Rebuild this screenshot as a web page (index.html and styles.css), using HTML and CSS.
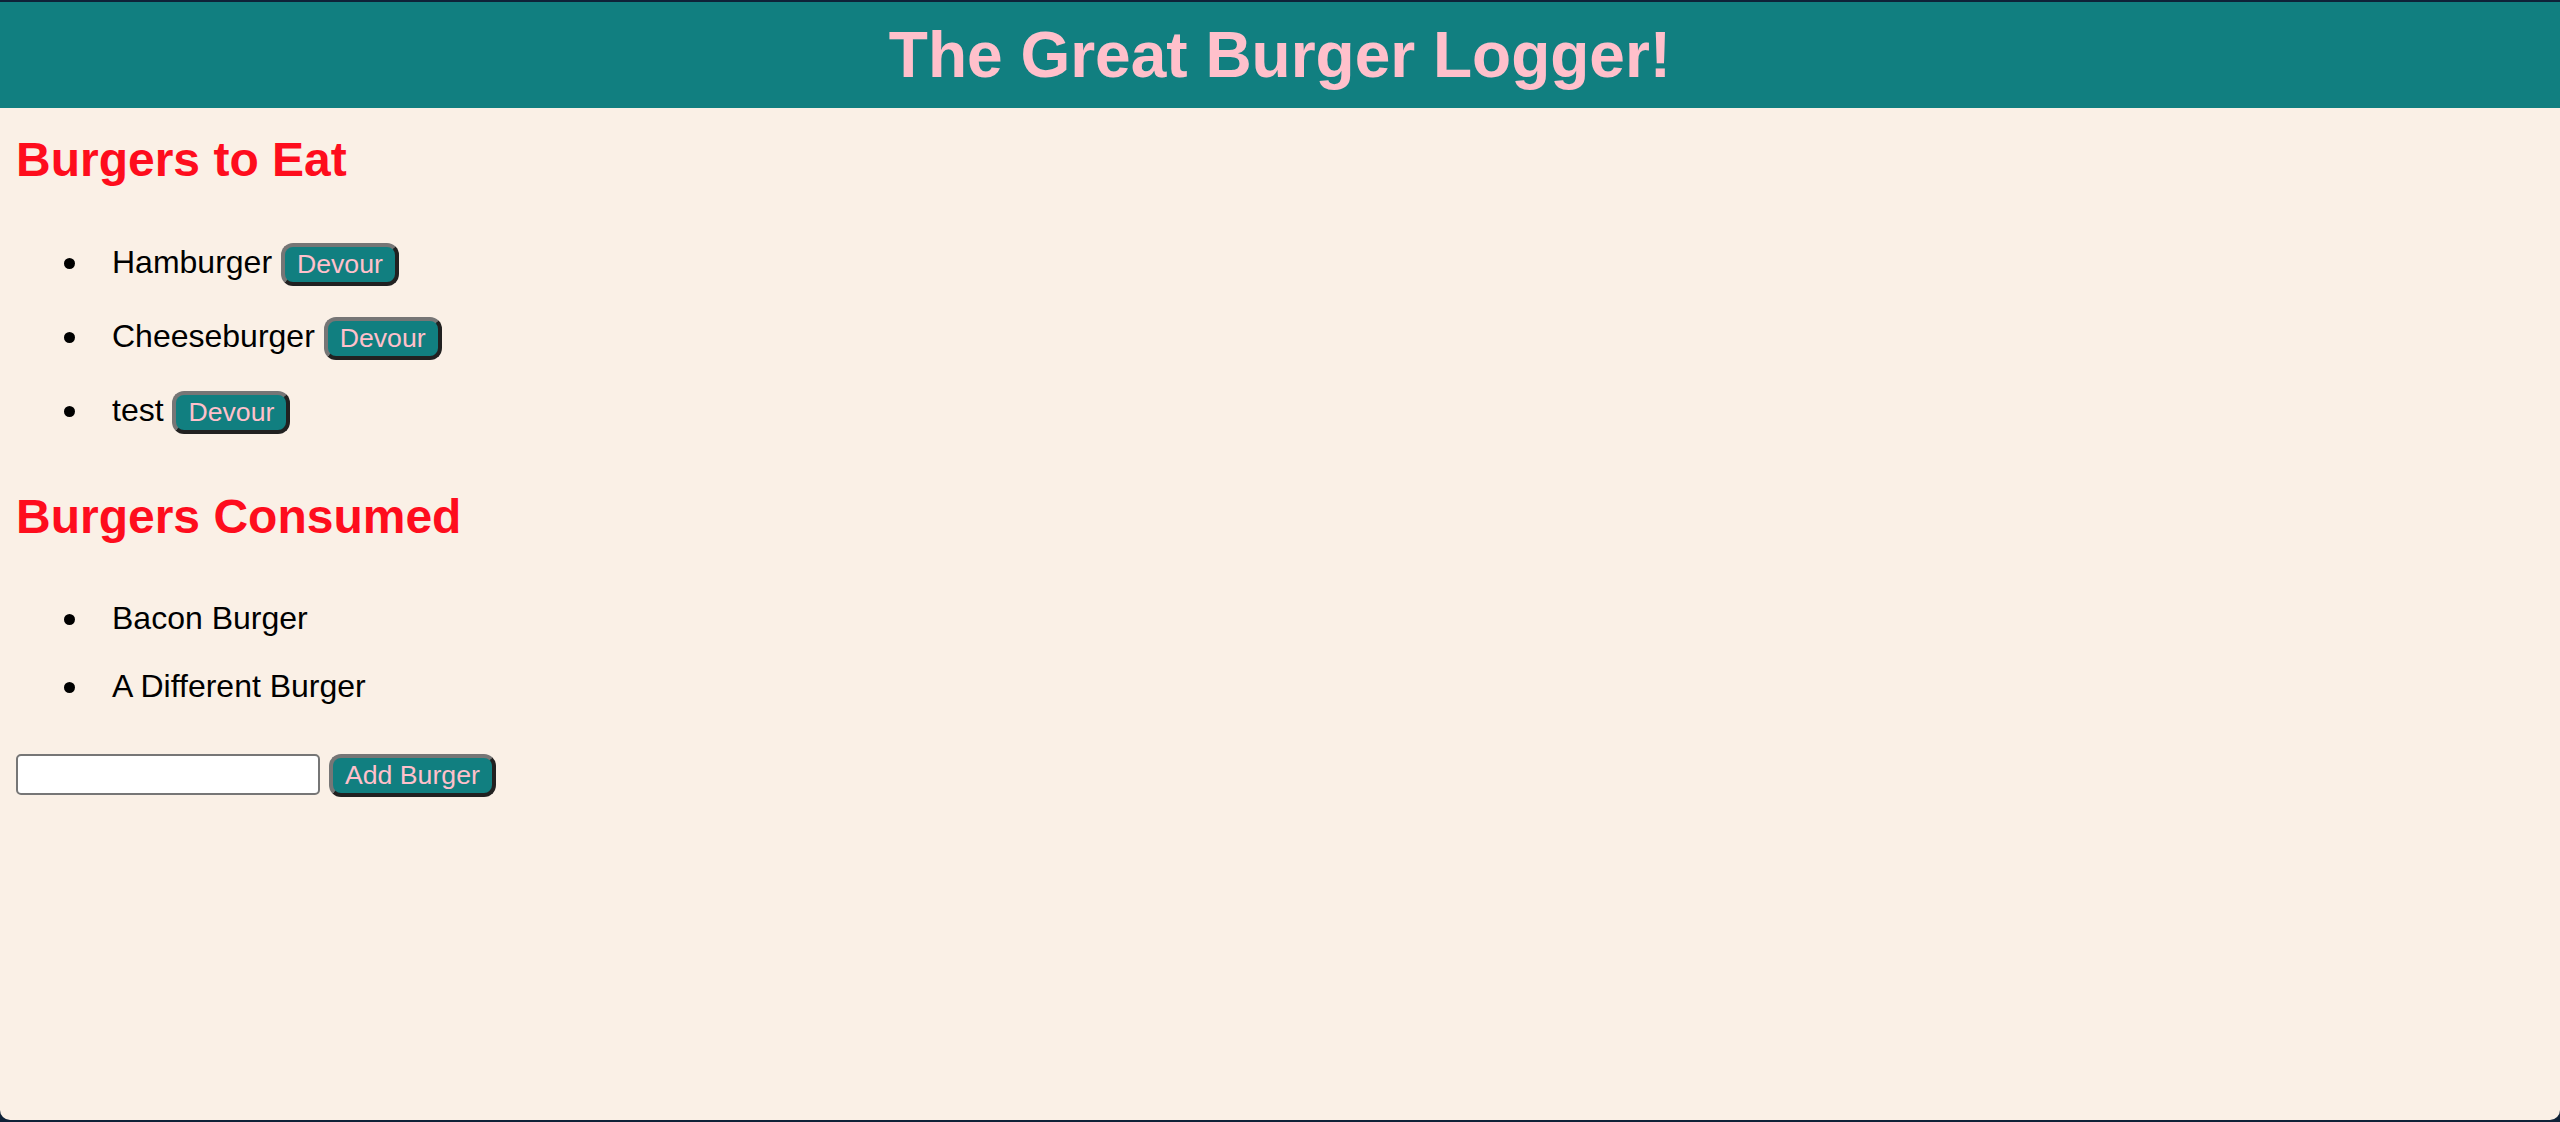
FILE: index.html
```html
<!DOCTYPE html>
<html lang="en">
<head>
<meta charset="utf-8">
<title>The Great Burger Logger!</title>
<link rel="stylesheet" href="styles.css">
</head>
<body>
<div class="window">
  <header class="top-bar">
    <h1 class="title">The Great Burger Logger!</h1>
  </header>
  <main class="content">
    <h2 class="section-title">Burgers to Eat</h2>
    <ul class="burger-list">
      <li class="burger">Hamburger <button class="btn" type="button">Devour</button></li>
      <li class="burger">Cheeseburger <button class="btn" type="button">Devour</button></li>
      <li class="burger">test <button class="btn" type="button">Devour</button></li>
    </ul>
    <h2 class="section-title">Burgers Consumed</h2>
    <ul class="burger-list eaten">
      <li class="burger">Bacon Burger</li>
      <li class="burger">A Different Burger</li>
    </ul>
    <form class="add-form">
      <input class="burger-input" type="text" name="burger">
      <button class="btn" type="button">Add Burger</button>
    </form>
  </main>
</div>
</body>
</html>
```

FILE: styles.css
```css
html {
  background: #0f2238;
}

body {
  margin: 0;
  padding: 2px 0;
  font-family: "Liberation Sans", Arial, sans-serif;
  color: #000;
}

.window {
  height: 1118px;
  background: #faf0e6;
  border-radius: 0 0 10px 10px;
  overflow: hidden;
}

.top-bar {
  background: #117f80;
  padding: 16px;
}

.title {
  margin: 0;
  font-size: 64px;
  font-weight: bold;
  line-height: normal;
  color: #ffc0cb;
  text-align: center;
}

.content {
  padding: 24px 16px 0;
}

.section-title {
  margin: 0;
  font-size: 48px;
  font-weight: bold;
  line-height: normal;
  color: #fe0d1d;
}

.burger-list {
  list-style: none;
  margin: 56px 0 55px;
  padding: 0 0 0 96px;
  display: flex;
  flex-direction: column;
  gap: 31px;
  font-size: 32px;
  line-height: normal;
}

.burger-list.eaten {
  margin-bottom: 49px;
}

.burger::before {
  content: "";
  display: inline-block;
  width: 11px;
  height: 11px;
  border-radius: 50%;
  background: #000;
  margin-left: -48px;
  margin-right: 37px;
  vertical-align: 4.5px;
}

.btn {
  font-family: "Liberation Sans", Arial, sans-serif;
  font-size: 26.67px;
  line-height: normal;
  color: #ffc0cb;
  background: #117f80;
  border: 4px outset #767676;
  border-radius: 12px;
  padding: 2px 12px;
  margin: 0;
}

.add-form {
  display: flex;
  align-items: flex-start;
  gap: 9px;
  margin: 0;
}

.burger-input {
  box-sizing: border-box;
  width: 304px;
  height: 41px;
  margin: 0;
  padding: 2px 4px;
  border: 2px solid #767676;
  border-radius: 5px;
  background: #fff;
  font-family: "Liberation Sans", Arial, sans-serif;
  font-size: 26.67px;
}
```
